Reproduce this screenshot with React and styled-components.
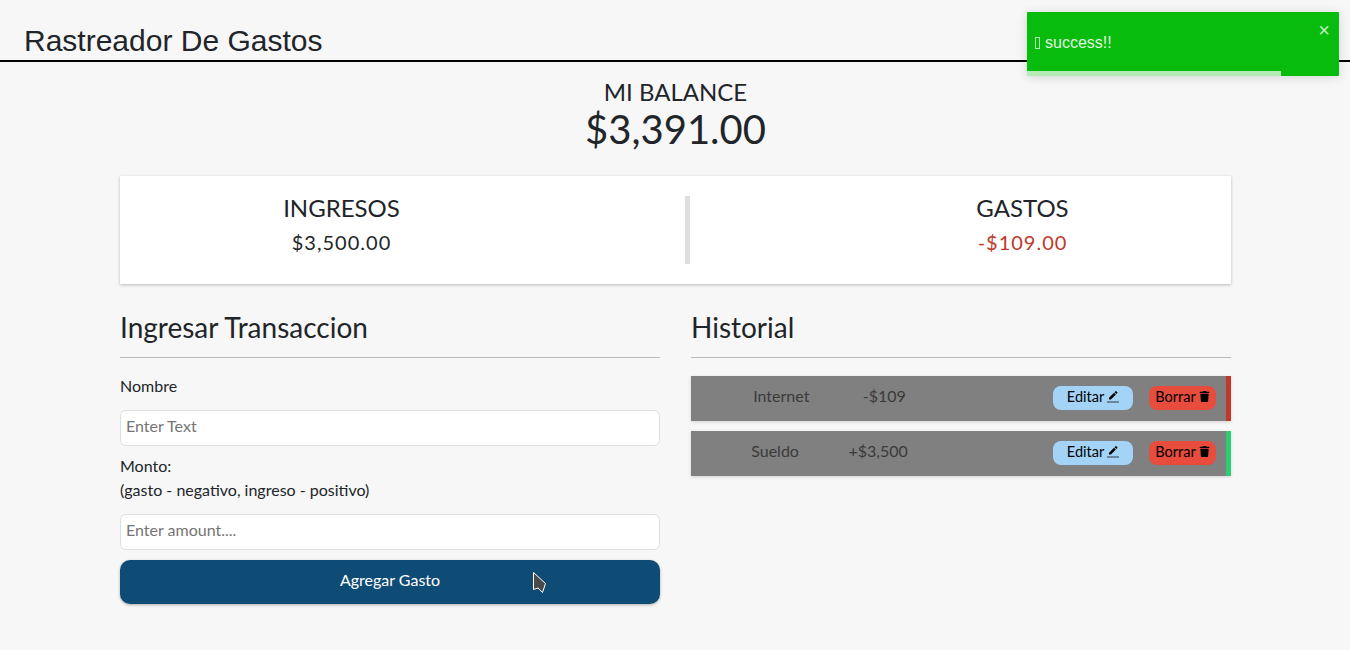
import React from "react";
import styled, { createGlobalStyle } from "styled-components";
import { FaTrash } from "react-icons/fa";

const GlobalStyle = createGlobalStyle`
  * { box-sizing: border-box; }
  body {
    margin: 0;
    background: #f7f7f7;
    color: #212529;
    font-family: Lato, "Liberation Sans", sans-serif;
    font-size: 16px;
    text-rendering: optimizeLegibility;
  }
`;

const transactions = [
  { id: 1, name: "Internet", amount: "-$109", positive: false },
  { id: 2, name: "Sueldo", amount: "+$3,500", positive: true },
];

const Page = styled.div`
  position: relative;
  height: 650px;
  overflow: hidden;
`;

const Header = styled.header`
  height: 62px;
  padding: 23px 0 0 24px;
  border-bottom: 2px solid #000;
`;

const Title = styled.h1`
  margin: 0;
  font-family: "Liberation Sans", Arial, sans-serif;
  font-size: 30px;
  line-height: 36px;
  font-weight: 400;
`;

const Main = styled.main`
  width: 1111px;
  margin-left: 120px;
`;

const Balance = styled.section`
  padding-top: 15px;
  text-align: center;
`;

const BalanceLabel = styled.h4`
  margin: 0;
  font-size: 24px;
  line-height: 29px;
  font-weight: 400;
`;

const BalanceValue = styled.h1`
  margin: 0;
  font-size: 40px;
  line-height: 46px;
  font-weight: 400;
`;

const Summary = styled.section`
  display: flex;
  align-items: center;
  height: 108px;
  margin-top: 24px;
  background: #fff;
  box-shadow: 0 1px 3px rgba(0, 0, 0, 0.25);
`;

const SummaryCol = styled.div`
  flex: ${(p) => (p.$side === "left" ? "0 0 565px" : "1")};
  align-self: flex-start;
  padding: 17px ${(p) => (p.$side === "left" ? "122px" : "0")} 0
    ${(p) => (p.$side === "left" ? "0" : "124px")};
  text-align: center;
`;

const SummaryLabel = styled.h4`
  margin: 0;
  font-size: 24px;
  line-height: 29px;
  font-weight: 400;
`;

const SummaryValue = styled.p`
  margin: 8px 0 0;
  font-size: 20px;
  line-height: 24px;
  letter-spacing: 1px;
  color: ${(p) => (p.$negative ? "#c0392b" : "#212529")};
`;

const Divider = styled.div`
  width: 5px;
  height: 68px;
  background: #dedede;
`;

const Columns = styled.div`
  display: grid;
  grid-template-columns: 540px 540px;
  justify-content: space-between;
  margin-top: 26px;
`;

const SectionTitle = styled.h3`
  margin: 0 0 16px;
  padding-bottom: 13px;
  font-size: 28px;
  line-height: 34px;
  font-weight: 400;
  border-bottom: 1px solid #bbb;
`;

const Label = styled.label`
  display: block;
  font-size: 16px;
  line-height: 24px;
  margin-bottom: 12px;
`;

const Input = styled.input`
  display: block;
  width: 100%;
  height: 36px;
  padding: 0 5px 5px;
  margin-bottom: 8px;
  background: #fff;
  border: 1px solid #dedede;
  border-radius: 6px;
  font-family: Lato, sans-serif;
  font-size: 16px;
  &::placeholder { color: #757575; }
`;

const SubmitButton = styled.button`
  display: block;
  width: 100%;
  height: 44px;
  margin-top: 10px;
  padding: 0 0 6px;
  background: #0f4c75;
  color: #fff;
  border: 0;
  border-radius: 10px;
  box-shadow: 0 1px 3px rgba(0, 0, 0, 0.3);
  font-family: Lato, sans-serif;
  font-size: 16px;
`;

const List = styled.ul`
  display: flex;
  flex-direction: column;
  gap: 10px;
  margin: 18px 0 0;
  padding: 0;
  list-style: none;
`;

const Item = styled.li`
  display: flex;
  align-items: center;
  height: 45px;
  padding-left: 35.5px;
  background: #808080;
  border-right: 5px solid ${(p) => (p.$positive ? "#2ecc71" : "#c0392b")};
  box-shadow: 0 1px 3px rgba(0, 0, 0, 0.15);
  color: #3a3a3a;
`;

const ItemInfo = styled.div`
  display: flex;
  justify-content: space-around;
  width: 206px;
  margin-bottom: 6px;
`;

const Actions = styled.div`
  display: flex;
  align-items: center;
  gap: 16px;
  margin: 0 10px 2px auto;
`;

const ActionButton = styled.button`
  display: flex;
  align-items: center;
  justify-content: center;
  gap: 3px;
  width: ${(p) => p.$width}px;
  height: 24px;
  padding: 0 0 3px;
  background: ${(p) => p.$bg};
  color: #000;
  border: 0;
  border-radius: 8px;
  font-family: Lato, sans-serif;
  font-size: 14.5px;
`;

const PencilSvg = styled.svg`
  margin-top: 2px;
`;

const Toast = styled.div`
  position: absolute;
  top: 12px;
  right: 11px;
  width: 312px;
  height: 64px;
  padding: 0 8px 3px;
  display: flex;
  align-items: center;
  gap: 5px;
  background: #07bc0c;
  color: rgba(255, 255, 255, 0.9);
  border-radius: 1px;
  box-shadow: 0 1px 10px rgba(0, 0, 0, 0.1), 0 2px 15px rgba(0, 0, 0, 0.05);
  font-family: "Liberation Sans", Arial, sans-serif;
  font-size: 16px;
`;

const ToastGlyph = styled.span`
  width: 5px;
  height: 12px;
  border: 1px solid rgba(255, 255, 255, 0.7);
`;

const ToastClose = styled.span`
  position: absolute;
  top: 9px;
  right: 9px;
  font-size: 20px;
  line-height: 18px;
  color: rgba(255, 255, 255, 0.75);
`;

const ToastBar = styled.div`
  position: absolute;
  left: 0;
  bottom: 0;
  height: 5px;
  background: rgba(255, 255, 255, 0.7);
`;

const Cursor = styled.svg`
  position: absolute;
  left: 532px;
  top: 571px;
`;

const PencilIcon = () => (
  <PencilSvg width="12" height="12" viewBox="0 0 24 24" fill="currentColor">
    <path d="M17.75 7 14 3.25l-10 10V17h3.75l10-10zm2.96-2.96c.39-.39.39-1.02 0-1.41L18.37.29a.9959.9959 0 0 0-1.41 0L15 2.25 18.75 6l1.96-1.96z" />
    <path d="M0 20h24v4H0z" fillOpacity=".36" />
  </PencilSvg>
);

export default function App() {
  return (
    <Page>
      <GlobalStyle />
      <Header>
        <Title>Rastreador De Gastos</Title>
      </Header>
      <Main>
        <Balance>
          <BalanceLabel>MI BALANCE</BalanceLabel>
          <BalanceValue>$3,391.00</BalanceValue>
        </Balance>
        <Summary>
          <SummaryCol $side="left">
            <SummaryLabel>INGRESOS</SummaryLabel>
            <SummaryValue>$3,500.00</SummaryValue>
          </SummaryCol>
          <Divider />
          <SummaryCol $side="right">
            <SummaryLabel>GASTOS</SummaryLabel>
            <SummaryValue $negative>-$109.00</SummaryValue>
          </SummaryCol>
        </Summary>
        <Columns>
          <section>
            <SectionTitle>Ingresar Transaccion</SectionTitle>
            <Label>Nombre</Label>
            <Input placeholder="Enter Text" />
            <Label>
              Monto:
              <br />
              (gasto - negativo, ingreso - positivo)
            </Label>
            <Input placeholder="Enter amount...." />
            <SubmitButton>Agregar Gasto</SubmitButton>
          </section>
          <section>
            <SectionTitle>Historial</SectionTitle>
            <List>
              {transactions.map((t) => (
                <Item key={t.id} $positive={t.positive}>
                  <ItemInfo>
                    <span>{t.name}</span>
                    <span>{t.amount}</span>
                  </ItemInfo>
                  <Actions>
                    <ActionButton $bg="#a3d4f7" $width={80}>
                      Editar <PencilIcon />
                    </ActionButton>
                    <ActionButton $bg="#e74c3c" $width={67}>
                      Borrar <FaTrash size={11} />
                    </ActionButton>
                  </Actions>
                </Item>
              ))}
            </List>
          </section>
        </Columns>
      </Main>
      <Toast>
        <ToastGlyph />
        <span>success!!</span>
        <ToastClose>×</ToastClose>
        <ToastBar style={{ width: `${(254 / 312) * 100}%` }} />
      </Toast>
      <Cursor width="16" height="24" viewBox="0 0 16 24">
        <path d="M1.5 1.5 L1.5 18.5 L6 17 L10.5 21.5 L13.5 12.5 Z" fill="#4a4a4a" stroke="#fff" strokeWidth="1" />
      </Cursor>
    </Page>
  );
}
